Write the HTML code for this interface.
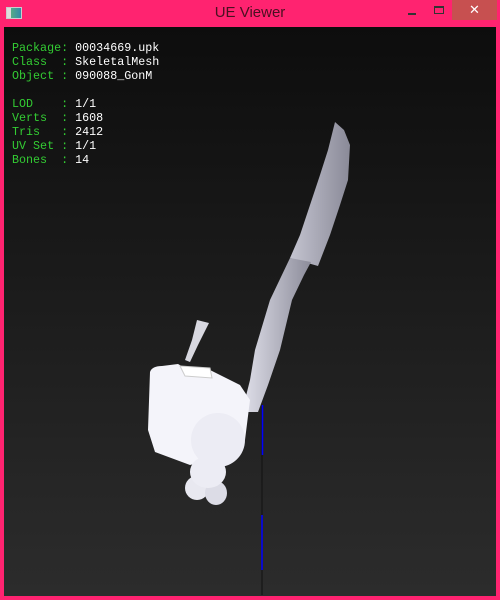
<!DOCTYPE html>
<html><head><style>
body{margin:0;width:500px;height:600px;overflow:hidden;background:#ff2370;font-family:"Liberation Mono",monospace}
#t{position:absolute;left:0;top:0;width:500px;height:27px;text-align:center;font:15px "Liberation Sans",sans-serif;line-height:26px;color:#4a1020}
#c{position:absolute;left:4px;top:27px;width:492px;height:569px;background:linear-gradient(#0d0d0d,#2c2c2c)}
.tx{position:absolute;left:8px;font-size:11.7px;line-height:14px;color:#fff;white-space:pre}
.g{color:#3c3}
</style></head><body>
<div id="t">UE Viewer</div>
<div style="position:absolute;left:6px;top:7px;width:14px;height:10px;border:1px solid #ccc;background:linear-gradient(90deg,#ddd 30%,#5a8 30%,#38a)"></div>
<div style="position:absolute;left:408px;top:13px;width:8px;height:2px;background:#333"></div>
<div style="position:absolute;left:434px;top:6px;width:8px;height:5px;border:1px solid #333;border-top-width:2px"></div>
<div style="position:absolute;left:452px;top:0;width:45px;height:20px;background:#c75050;color:#fff;text-align:center;font:13px 'Liberation Sans',sans-serif;line-height:20px">✕</div>
<div id="c">
<div class="tx" style="top:14px"><span class="g">Package:</span> 00034669.upk
<span class="g">Class  :</span> SkeletalMesh
<span class="g">Object :</span> 090088_GonM

<span class="g">LOD    :</span> 1/1
<span class="g">Verts  :</span> 1608
<span class="g">Tris   :</span> 2412
<span class="g">UV Set :</span> 1/1
<span class="g">Bones  :</span> 14</div>
</div>
<svg width="500" height="600" style="position:absolute;left:0;top:0">
<defs>
<linearGradient id="a" x1="0" x2="1"><stop offset="0" stop-color="#c4c4d0"/><stop offset="1" stop-color="#8a8a98"/></linearGradient>
<linearGradient id="b" x1="0" x2="1"><stop offset="0" stop-color="#e0e0ea"/><stop offset="1" stop-color="#8c8c9a"/></linearGradient>
</defs>
<line x1="262" y1="405" x2="262" y2="595" stroke="#111" stroke-width="1"/>
<line x1="262.5" y1="405" x2="262.5" y2="455" stroke="#00f" stroke-width="1.5"/>
<line x1="262" y1="515" x2="262" y2="570" stroke="#00f" stroke-width="1.5"/>
<path d="M335,122 L344,130 L350,145 L348,180 L340,205 L330,235 L318,266 L290,258 L300,235 L310,205 L320,175 L328,150 Z" fill="url(#a)"/>
<path d="M290,258 L311,262 L304,275 L292,300 L280,350 L268,385 L258,412 L242,412 L250,380 L255,350 L270,300 Z" fill="url(#b)"/>
<path d="M197,320 L209,323 L198,345 L190,362 L185,360 L192,340 Z" fill="#d8d8e0"/>
<path d="M150,372 Q152,366 162,366 L178,364 L185,368 L210,370 L240,385 L250,400 L245,440 L232,455 L190,465 L155,452 L148,430 Z" fill="#f4f4fa"/>
<path d="M180,366 L210,368 L212,378 L185,376 Z" fill="#fff" stroke="#ccc" stroke-width="1"/>
<ellipse cx="218" cy="440" rx="27" ry="27" fill="#ececf4"/>
<ellipse cx="197" cy="488" rx="12" ry="12" fill="#e8e8f0"/>
<ellipse cx="216" cy="493" rx="11" ry="12" fill="#dcdce6"/>
<ellipse cx="208" cy="472" rx="18" ry="16" fill="#ececf4"/>
</svg>
</body></html>
